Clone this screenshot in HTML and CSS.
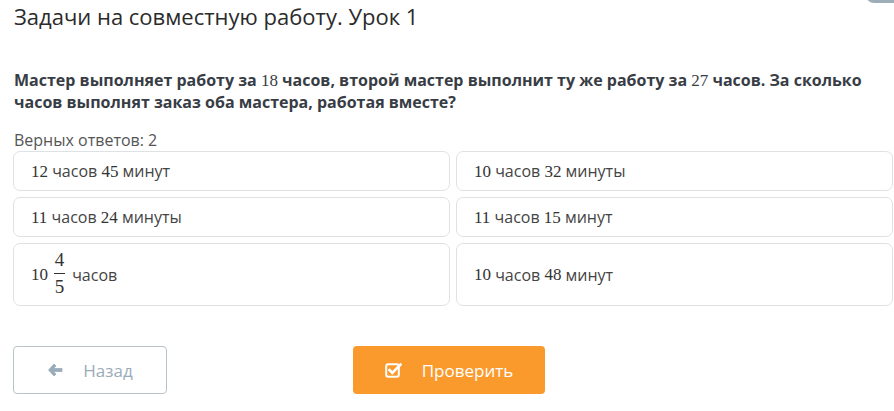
FILE: index.html
```html
<!DOCTYPE html>
<html lang="ru">
<head>
<meta charset="utf-8">
<link rel="stylesheet" href="styles.css">
</head>
<body>
<div class="corner"></div>
<div class="page">
  <h1 class="title">Задачи на совместную работу. Урок 1</h1>
  <p class="question">Мастер выполняет работу за <span class="num">18</span> часов, второй мастер выполнит ту же работу за <span class="num">27</span> часов. За сколько часов выполнят заказ оба мастера, работая вместе?</p>
  <div class="hint">Верных ответов: 2</div>
  <div class="answers">
    <div class="answer"><span class="num">12</span> часов <span class="num">45</span> минут</div>
    <div class="answer"><span class="num">10</span> часов <span class="num">32</span> минуты</div>
    <div class="answer"><span class="num">11</span> часов <span class="num">24</span> минуты</div>
    <div class="answer"><span class="num">11</span> часов <span class="num">15</span> минут</div>
    <div class="answer tall"><span class="num">10</span><span class="frac"><span class="num">4</span><span class="bar"></span><span class="num">5</span></span> часов</div>
    <div class="answer tall"><span class="num">10</span> часов <span class="num">48</span> минут</div>
  </div>
  <div class="buttons">
    <button class="btn back">
      <svg class="ico" width="16" height="14" viewBox="0 0 16 14"><path d="M7 1 L1.5 7 L7 13 L9 11 L6.5 8.5 H15 V5.5 H6.5 L9 3 Z" fill="#9aacb9" stroke="#9aacb9" stroke-width="0.8" stroke-linejoin="round"/></svg>
      <span>Назад</span>
    </button>
    <button class="btn check">
      <svg class="ico" width="17" height="16" viewBox="0 0 17 16"><rect x="1.2" y="2.2" width="12.6" height="12.6" rx="2" fill="none" stroke="#fff" stroke-width="2"/><path d="M4.5 8 L7.3 10.8 L15.5 2.6" fill="none" stroke="#fff" stroke-width="2.6" stroke-linecap="square"/></svg>
      <span>Проверить</span>
    </button>
  </div>
</div>
</body>
</html>
```

FILE: styles.css
```css
html, body {
  margin: 0;
  padding: 0;
  background: #fff;
}
body {
  font-family: "Open Sans", "Liberation Sans", sans-serif;
  color: #333;
  width: 894px;
  height: 411px;
  overflow: hidden;
  position: relative;
}
.corner {
  position: absolute;
  top: -6px;
  right: 0;
  width: 28px;
  height: 9px;
  background: #9eaeb8;
  border-radius: 0 0 0 8px;
}
.page {
  padding: 0 2px 0 13px;
}
.title {
  margin: 0;
  padding-top: 1px;
  font-size: 22px;
  font-weight: 400;
  line-height: 30px;
  color: #2b2b2b;
  padding-left: 1px;
}
.question {
  margin: 38px 0 0 1px;
  font-size: 16px;
  font-weight: 700;
  line-height: 22px;
  color: #383d45;
}
.num {
  line-height: 1;
}
.question .num {
  font-family: "Liberation Serif", "DejaVu Serif", serif;
  font-weight: 400;
  font-size: 17px;
}
.hint {
  margin: 17px 0 0 1px;
  font-size: 16px;
  line-height: 20px;
  color: #555;
}
.answers {
  margin-top: 1px;
  display: grid;
  grid-template-columns: 437px 437px;
  column-gap: 6px;
  row-gap: 6px;
}
.answer {
  box-sizing: border-box;
  height: 40px;
  border: 1px solid #dfe2e4;
  border-radius: 7px;
  padding: 0 17px;
  display: flex;
  align-items: center;
  font-size: 16px;
  color: #444;
  white-space: pre;
}
.answer .num {
  font-family: "Liberation Serif", "DejaVu Serif", serif;
  font-size: 17px;
  color: #333;
}
.answer.tall {
  height: 63px;
}
.frac {
  display: inline-flex;
  flex-direction: column;
  align-items: center;
  margin: 0 3px 0 6px;
  position: relative;
  top: -1px;
}
.frac .num {
  font-size: 19px;
  line-height: 18px;
}
.frac .bar {
  width: 11px;
  height: 1px;
  background: #333;
  margin: 4px 0 4px;
}
.buttons {
  margin-top: 40px;
  display: flex;
  gap: 186px;
}
.btn {
  box-sizing: border-box;
  height: 48px;
  border-radius: 4px;
  font-family: "Open Sans", "Liberation Sans", sans-serif;
  font-size: 17px;
  display: flex;
  align-items: center;
  justify-content: center;
  gap: 20px;
  cursor: pointer;
}
.back {
  width: 154px;
  background: #fff;
  border: 1px solid #b8c3ca;
  color: #9aacb9;
}
.check {
  width: 192px;
  background: #fa9a2d;
  border: none;
  color: #fff;
}
.ico {
  display: block;
}
```
